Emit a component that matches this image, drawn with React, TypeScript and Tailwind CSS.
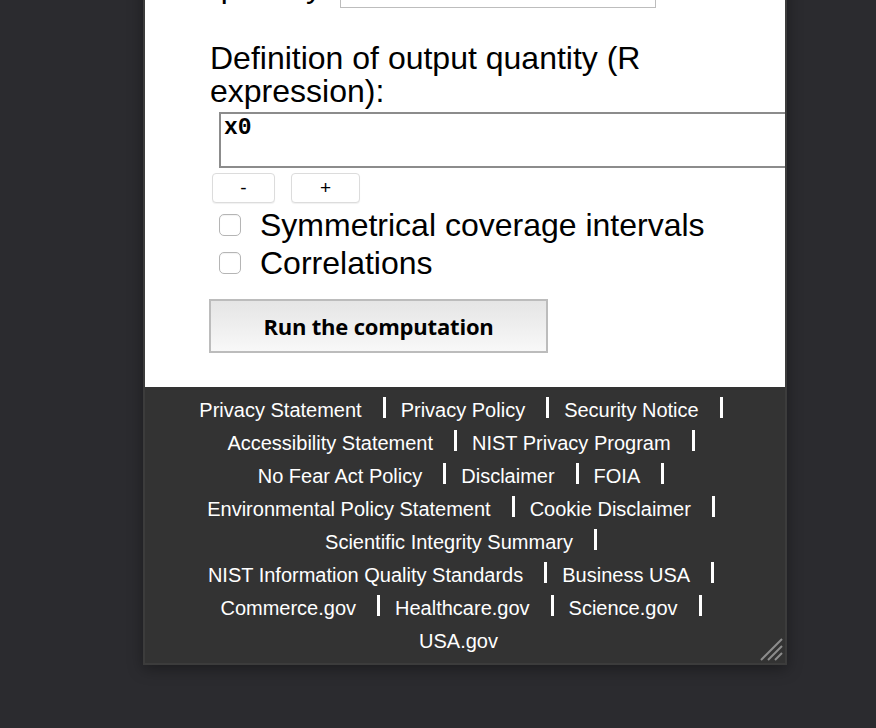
const footerLines: string[][] = [
  ["Privacy Statement", "Privacy Policy", "Security Notice"],
  ["Accessibility Statement", "NIST Privacy Program"],
  ["No Fear Act Policy", "Disclaimer", "FOIA"],
  ["Environmental Policy Statement", "Cookie Disclaimer"],
  ["Scientific Integrity Summary"],
  ["NIST Information Quality Standards", "Business USA"],
  ["Commerce.gov", "Healthcare.gov", "Science.gov"],
];

function Bar() {
  return <span className="inline-block w-[3px] h-[21px] bg-white ml-[21px] mr-[15px] align-[-1px]" />;
}

function Checkbox({ label }: { label: string }) {
  return (
    <label className="flex items-center h-[38px] ml-[9px]">
      <span className="w-[22px] h-[22px] rounded-[5px] border border-[#b5b5b5] bg-white shadow-[inset_0_1px_1px_rgba(0,0,0,0.05)]" />
      <span className="ml-[19px] text-[32px] leading-[38px] text-black">{label}</span>
    </label>
  );
}

export default function App() {
  return (
    <div
      className="min-h-screen h-[728px] w-full bg-[#2b2b2f] overflow-hidden"
      style={{ fontFamily: '"Liberation Sans", Arial, sans-serif' }}
    >
      <div className="relative ml-[143px] -mt-[40px] w-[644px] border-2 border-[#3c3c3c] shadow-[0_4px_14px_rgba(0,0,0,0.35)]">
        {/* Form */}
        <div className="bg-white pl-[65px] pt-[8px] pb-[34px] overflow-hidden">
          <div className="flex items-start h-[33px]">
            <span className="text-[32px] leading-[33px] text-black w-[130px]">quantity:</span>
            <div className="mt-[8px] w-[316px] h-[30px] border border-[#bdbdbd] bg-white" />
          </div>

          <h2 className="mt-[39px] text-[32px] leading-[33px] text-black font-normal">
            Definition of output quantity (R
            <br />
            expression):
          </h2>

          <div className="mt-[4px] ml-[9px] w-[620px] h-[56px] border-2 border-[#8c8c8c] px-[3px] pt-[2px]">
            <span
              className="text-[23px] leading-[24px] font-bold text-black"
              style={{ fontFamily: '"Liberation Mono", "Courier New", monospace' }}
            >
              x0
            </span>
          </div>

          <div className="flex mt-[5px] ml-[2px] gap-[16px]">
            <button className="w-[63px] h-[30px] rounded-[4px] border border-[#dcdcdc] bg-white text-[19px] text-black shadow-[0_1px_1px_rgba(0,0,0,0.06)]">
              -
            </button>
            <button className="w-[69px] h-[30px] rounded-[4px] border border-[#dcdcdc] bg-white text-[19px] text-black shadow-[0_1px_1px_rgba(0,0,0,0.06)]">
              +
            </button>
          </div>

          <div className="mt-[3px]">
            <Checkbox label="Symmetrical coverage intervals" />
            <Checkbox label="Correlations" />
          </div>

          <button
            className="mt-[17px] -ml-[1px] w-[339px] h-[54px] border-2 border-[#bcbcbc] bg-gradient-to-b from-[#e5e5e5] to-[#f8f8f8] text-[22px] font-bold text-black tracking-[-0.2px]"
            style={{ fontFamily: '"Open Sans", Roboto, sans-serif' }}
          >
            Run the computation
          </button>
        </div>

        {/* Footer */}
        <footer className="bg-[#333333] pt-[7px] pb-[5px] pl-[7px] text-white text-[20px] leading-[33px]">
          {footerLines.map((line, i) => (
            <div key={i} className="text-center whitespace-nowrap">
              {line.map((item) => (
                <span key={item}>
                  <a className="text-white">{item}</a>
                  <Bar />
                </span>
              ))}
            </div>
          ))}
          <div className="text-center pr-[20px]">
            <a className="text-white">USA.gov</a>
          </div>

          <svg className="absolute right-[2px] bottom-[2px]" width="24" height="24" viewBox="0 0 24 24">
            <path d="M2 23 L23 2 M9 23 L23 9 M16 23 L23 16" stroke="#8c8c8c" strokeWidth="2" />
          </svg>
        </footer>
      </div>
    </div>
  );
}
